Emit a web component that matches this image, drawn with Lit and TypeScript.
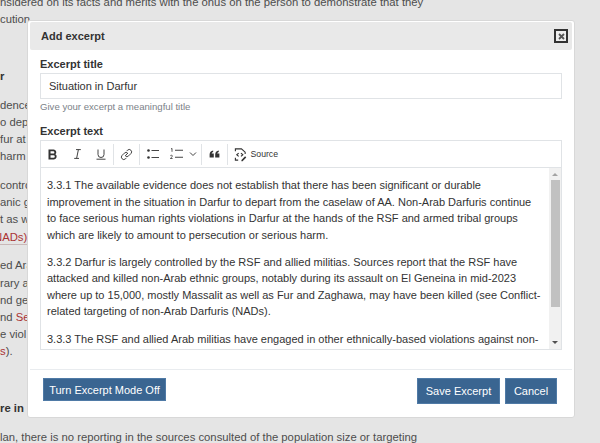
import { LitElement, html, css } from "lit";
import { customElement } from "lit/decorators.js";

@customElement("app-root")
export class AppRoot extends LitElement {
  static styles = css`
    :host { display: block; width: 600px; height: 443px; overflow: hidden; position: relative; background: #e5e5e5; font-family: "Liberation Sans", Arial, sans-serif; }
    .page { margin-top: -6px; font-size: 11.3px; line-height: 17.1px; color: #4d4d4d; white-space: nowrap; }
    .page p { margin: 0; }
    .page .h { font-weight: 700; color: #333; margin-top: 40px; }
    .page .g { margin-top: 11.8px; }
    .red { color: #a33; }
    .u { border-bottom: 1px solid #c9b8b8; display: inline-block; line-height: 14px; margin-left: -6px; }
    .modal { position: absolute; left: 27px; top: 20px; width: 548px; height: 398px; box-sizing: border-box; background: #fff; border: 1px solid #d8d8d8; border-radius: 3px; padding: 1px 2px 0; display: flex; flex-direction: column; color: #333; }
    .head { height: 28px; flex: none; background: #e9e9e9; border-radius: 2px; display: flex; align-items: center; justify-content: space-between; padding: 0 4px 0 11px; font-weight: 700; font-size: 11px; }
    .close { width: 14px; height: 14px; box-sizing: border-box; border: 2px solid #333; background: #eee; display: flex; align-items: center; justify-content: center; padding: 0; }
    .body { flex: 1; padding: 8px 10px 0 10px; display: flex; flex-direction: column; min-height: 0; }
    label { display: block; font-weight: 700; font-size: 11px; line-height: 13px; color: #333; }
    .input { margin-top: 2px; height: 26px; flex: none; box-sizing: border-box; border: 1px solid #e0e3e6; display: flex; align-items: center; padding-left: 8px; font-size: 11px; color: #333; }
    .hint { margin-top: 1px; height: 13px; line-height: 13px; font-size: 9.6px; color: #7b8288; }
    .body label.t2 { margin-top: 12px; }
    .editor { margin-top: 2px; border: 1px solid #e0e3e6; height: 210px; flex: none; box-sizing: border-box; display: flex; flex-direction: column; }
    .toolbar { flex: none; height: 27px; box-sizing: border-box; border-bottom: 1px solid #e0e3e6; display: flex; align-items: center; color: #333; }
    .tb { height: 26px; display: flex; align-items: center; justify-content: center; flex: none; }
    .tb svg { display: block; }
    .w24 { width: 24px; }
    .w25 { width: 25px; }
    .w26 { width: 26px; }
    .w21 { width: 21px; }
    .chev { width: 11px; margin-right: 3px; }
    .sep { width: 1px; height: 21px; background: #e0e3e6; flex: none; }
    .src { display: flex; align-items: center; gap: 3.5px; font-size: 8.7px; padding-left: 6px; color: #333; }
    .content { flex: 1; min-height: 0; display: flex; overflow: hidden; }
    .text { flex: 1; min-width: 0; padding: 9px 8px 0 6px; font-size: 11px; line-height: 16.5px; color: #333; overflow: hidden; }
    .text p { margin: 0 0 10.8px; white-space: nowrap; }
    .bar { width: 12px; flex: none; background: #f1f1f1; display: flex; flex-direction: column; align-items: center; justify-content: space-between; position: relative; }
    .thumb { position: absolute; left: 1.5px; top: 12px; width: 9px; height: 127px; background: #c1c1c1; }
    .arrow { width: 0; height: 0; border-left: 3px solid transparent; border-right: 3px solid transparent; margin: 5px 0; }
    .up { border-bottom: 3px solid #a3a3a3; }
    .down { border-top: 3px solid #505050; }
    .foot { height: 48px; flex: none; border-top: 1px solid #e9ecef; display: flex; justify-content: space-between; padding: 8px 15px 0 13px; box-sizing: border-box; align-items: flex-start; }
    .right { display: flex; gap: 5px; }
    .btn { background: #3a6591; color: #fff; font-size: 11px; display: flex; align-items: center; justify-content: center; box-sizing: border-box; border: 1px solid #4f7aa6; }
    .b1 { width: 123px; height: 23px; }
    .b2 { width: 83px; height: 26px; }
    .b3 { width: 52px; height: 26px; }
  `;

  render() {
    return html`
      <div class="page">
        <p>nsidered on its facts and merits with the onus on the person to demonstrate that they</p>
        <p>cution</p>
        <p class="h">r</p>
        <p class="g">dence</p><p>o dep</p><p>fur at</p><p>harm</p>
        <p class="g">contro</p><p>anic g</p><p>t as w</p><p><span class="red u">NADs)</span></p>
        <p class="g">ed Ara</p><p>rary a</p><p>nd ge</p><p>nd <span class="red">Se</span></p><p>e viol</p><p><span class="red">s</span>).</p>
        <p class="h">re in</p>
        <p class="g">lan, there is no reporting in the sources consulted of the population size or targeting</p>
      </div>
      <div class="modal">
        <div class="head">
          <span>Add excerpt</span>
          <button class="close" aria-label="Close">
            <svg width="7" height="7" viewBox="0 0 7 7"><path d="M1 1 6 6M6 1 1 6" stroke="#555" stroke-width="1.8" fill="none"/></svg>
          </button>
        </div>
        <div class="body">
          <label>Excerpt title</label>
          <div class="input">Situation in Darfur</div>
          <div class="hint">Give your excerpt a meaningful title</div>
          <label class="t2">Excerpt text</label>
          <div class="editor">
            <div class="toolbar">
              <div class="tb w24"><svg width="10" height="11" viewBox="0 0 10 11"><path d="M.5.5h5a2.700 2.700 0 0 1 1.900 4.700 2.900 2.900 0 0 1-1.400 5.300H.5zM2.500 2.200v2.400h2.700a1.200 1.200 0 0 0 0-2.400zM2.500 6.200v2.600h3a1.300 1.300 0 0 0 0-2.600z" fill="#333" fill-rule="evenodd"/></svg></div>
              <div class="tb w24"><svg width="7" height="10" viewBox="0 0 7 10"><path d="M2 .6h4.800M.2 9.400h4.800M4.400.6 2.600 9.400" stroke="#444" stroke-width="1" fill="none"/></svg></div>
              <div class="tb w24"><svg width="10" height="11" viewBox="0 0 10 11"><path d="M2 .5v5a3 3 0 0 0 6 0v-5M.5 10.200h9" stroke="#444" stroke-width="1" fill="none"/></svg></div>
              <div class="sep"></div>
              <div class="tb w25"><svg width="13" height="13" viewBox="0 0 13 13"><path d="M5.200 7.800 8 5M6.500 3.200l1-1a2.400 2.400 0 0 1 3.400 3.400L8.700 7.800a2.400 2.400 0 0 1-3.400 0M6.500 9.800l-1 1a2.400 2.400 0 0 1-3.400-3.400l2.200-2.200a2.400 2.400 0 0 1 3.400 0" stroke="#444" stroke-width="1" fill="none"/></svg></div>
              <div class="sep"></div>
              <div class="tb w26"><svg width="12" height="10" viewBox="0 0 12 10"><circle cx="1.500" cy="1.500" r="1.300" fill="#333"/><circle cx="1.500" cy="8.500" r="1.300" fill="#333"/><path d="M4.500 1.500H12M4.500 8.500H12" stroke="#444" stroke-width="1.100"/></svg></div>
              <div class="tb w21"><svg width="13" height="12" viewBox="0 0 13 12"><path d="M1 1 2 .4v3.400M.3 7.800c.3-.8 2.300-.8 2.100.4-.1.700-1.500 1.300-2.100 2.300h2.300" stroke="#333" stroke-width=".8" fill="none"/><path d="M5 2.200h8M5 9.200h8" stroke="#444" stroke-width="1.100"/></svg></div>
              <div class="tb chev"><svg width="8" height="6" viewBox="0 0 8 6"><path d="M1 1.500 4 4.500 7 1.500" stroke="#444" stroke-width="1" fill="none"/></svg></div>
              <div class="sep"></div>
              <div class="tb w25"><svg width="11" height="8" viewBox="0 0 12 9"><path d="M.5 8.500V5C.5 2.500 2 .8 4.500.5v1.700C3.500 2.500 3 3 2.800 3.800h2.400v4.700zM6.800 8.500V5C6.800 2.500 8.300.8 10.800.5v1.700C9.800 2.500 9.300 3 9.100 3.800h2.400v4.700z" fill="#333"/></svg></div>
              <div class="sep"></div>
              <div class="src">
                <svg width="13" height="15" viewBox="0 0 14 15"><path d="M1.500 4V1.500h6.500L12 5v2M1.500 11v2.500h3M5 6 3 7.800 5 9.500M7.500 6l2 1.800-2 1.700" stroke="#333" stroke-width="1.200" fill="none"/><path d="M8 13.500 12 9.500l1.200 1.200-4 4H8z" fill="#333"/></svg>
                <span>Source</span>
              </div>
            </div>
            <div class="content">
              <div class="text">
                <p>3.3.1 The available evidence does not establish that there has been significant or durable<br>improvement in the situation in Darfur to depart from the caselaw of AA. Non-Arab Darfuris continue<br>to face serious human rights violations in Darfur at the hands of the RSF and armed tribal groups<br>which are likely to amount to persecution or serious harm.</p>
                <p>3.3.2 Darfur is largely controlled by the RSF and allied militias. Sources report that the RSF have<br>attacked and killed non-Arab ethnic groups, notably during its assault on El Geneina in mid-2023<br>where up to 15,000, mostly Massalit as well as Fur and Zaghawa, may have been killed (see Conflict-<br>related targeting of non-Arab Darfuris (NADs).</p>
                <p>3.3.3 The RSF and allied Arab militias have engaged in other ethnically-based violations against non-</p>
              </div>
              <div class="bar"><div class="arrow up"></div><div class="thumb"></div><div class="arrow down"></div></div>
            </div>
          </div>
        </div>
        <div class="foot">
          <div class="btn b1">Turn Excerpt Mode Off</div>
          <div class="right"><div class="btn b2">Save Excerpt</div><div class="btn b3">Cancel</div></div>
        </div>
      </div>
    `;
  }
}
